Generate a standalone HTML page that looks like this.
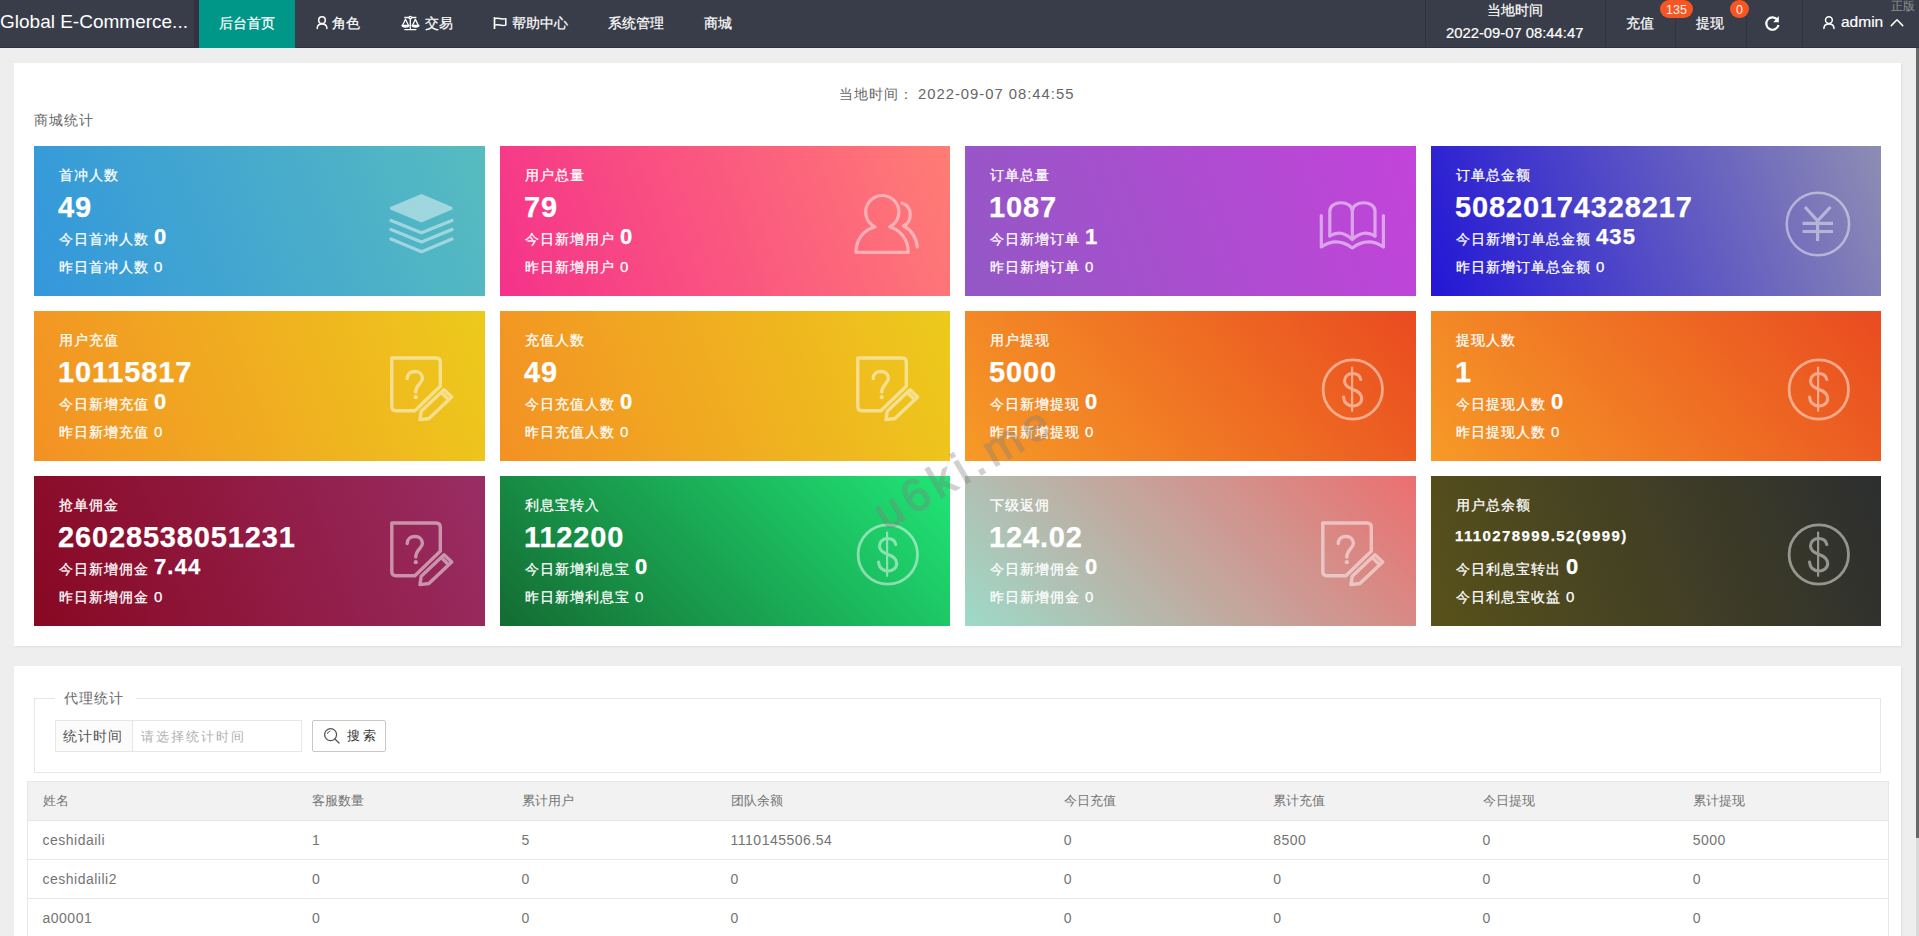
<!DOCTYPE html>
<html><head><meta charset="utf-8"><style>
*{box-sizing:border-box;margin:0;padding:0}
html,body{width:1919px;height:936px;overflow:hidden}
body{background:#eeeeee;font-family:"Liberation Sans",sans-serif;color:#666;position:relative}
.abs{position:absolute;white-space:nowrap}
#hdr{position:absolute;left:0;top:0;width:1919px;height:48px;background:#393d49;color:#fff;border-bottom:1px solid #30333d}
#hdr .t{position:absolute;white-space:nowrap;font-size:14px;line-height:20px;color:#fff;-webkit-text-stroke:0.2px #fff}
#hdr svg{position:absolute;overflow:visible}
.sep{position:absolute;top:0;width:1px;height:47px;background:#31343e}
.badge{position:absolute;height:18px;border-radius:9px;background:#f65623;color:#fff6ea;font-size:12.5px;line-height:20px;text-align:center}
.card{position:absolute;background:#fff;box-shadow:1px 1px 2px rgba(0,0,0,.07)}
.tile{position:absolute;height:150px;color:#fff;overflow:hidden;-webkit-text-stroke:0.25px #fff}
.tile .tt{position:absolute;left:25px;top:20px;font-size:14px;line-height:18px;letter-spacing:1px}
.tile .big{position:absolute;left:24px;top:45px;font-size:29px;line-height:32px;font-weight:bold;letter-spacing:0.85px}
.tile .big.sm{font-size:15px;top:51px;line-height:18px;letter-spacing:1.4px}
.tile .l1{position:absolute;left:25px;top:80px;font-size:14px;line-height:22px;letter-spacing:1px}
.tile .l1 b{font-size:22px;letter-spacing:1.2px}
.tile .l2{position:absolute;left:25px;top:112px;font-size:14px;line-height:18px;letter-spacing:1px}
.tile .l2 span{font-size:15px;letter-spacing:0}
.tile svg{position:absolute;left:355px;top:46px;width:64px;height:64px;overflow:visible}
.tc{position:absolute;font-size:14px;line-height:20px;letter-spacing:0.5px;white-space:nowrap;color:#747474}
.tl{position:absolute;height:1px;background:#e6e6e6}
</style></head><body>
<div id="hdr">
  <div class="t" style="left:0;top:11px;font-size:19px;line-height:22px;-webkit-text-stroke:0">Global E-Commerce...</div>
  <div style="position:absolute;left:194px;top:0;width:5px;height:48px;background:#353141"></div>
  <div style="position:absolute;left:199px;top:0;width:96px;height:48px;background:#009688"></div>
  <div class="t" style="left:219px;top:13px">后台首页</div>
  <svg style="left:310px;top:10px" width="25" height="25" viewBox="0 0 25 25"><g fill="none" stroke="#fff" stroke-width="1.5" stroke-linecap="round"><circle cx="12" cy="10.15" r="3.3"/><path d="M7.2 18.4 C7.2 15.5 9.3 13.9 12 13.9 C14.7 13.9 16.9 15.5 16.9 18.4"/></g></svg>
  <div class="t" style="left:332px;top:13px">角色</div>
  <svg style="left:398px;top:10px" width="25" height="25" viewBox="0 0 25 25"><g fill="none" stroke="#fff" stroke-width="1.3" stroke-linecap="round" stroke-linejoin="round">
    <path d="M6.8 7.5 L17.9 7.5 M12.3 8.5 L12.3 19.6 M6.8 19.6 L17.9 19.6"/><circle cx="12.3" cy="7.5" r="1.2" fill="#393d49"/>
    <path d="M4.5 15.5 L7.5 9.3 L10.5 15.5 M14.5 15.5 L17.4 9.3 L20.3 15.5"/>
    <path d="M4 15.3 L11 15.3 C11 17.6 4 17.6 4 15.3 Z M14 15.3 L21 15.3 C21 17.6 14 17.6 14 15.3 Z" fill="#fff"/></g></svg>
  <div class="t" style="left:425px;top:13px">交易</div>
  <svg style="left:489px;top:10px" width="25" height="25" viewBox="0 0 25 25"><g fill="none" stroke="#fff" stroke-width="1.5" stroke-linejoin="round">
    <path d="M5.5 7 L5.5 19" stroke-width="1.7"/><path d="M6 8.6 C9 7.2 12 10.2 16.8 8.6 L16.8 15.1 C12 16.6 9 13.7 6 15.1"/></g></svg>
  <div class="t" style="left:512px;top:13px">帮助中心</div>
  <div class="t" style="left:608px;top:13px">系统管理</div>
  <div class="t" style="left:704px;top:13px">商城</div>
  <div class="sep" style="left:1425px"></div>
  <div class="sep" style="left:1605px"></div>
  <div class="sep" style="left:1675px"></div>
  <div class="sep" style="left:1746px"></div>
  <div class="sep" style="left:1802px"></div>
  <div class="t" style="left:1487px;top:0px;font-size:14px">当地时间</div>
  <div class="t" style="left:1446px;top:23px;font-size:14.8px">2022-09-07 08:44:47</div>
  <div class="t" style="left:1626px;top:13px">充值</div>
  <div class="badge" style="left:1660px;top:0;width:33px">135</div>
  <div class="t" style="left:1696px;top:13px">提现</div>
  <div class="badge" style="left:1730px;top:0;width:19px">0</div>
  <svg style="left:1760px;top:10px" width="25" height="25" viewBox="0 0 25 25"><g fill="none" stroke="#fff" stroke-width="2.2"><path d="M17.6 10 A6.2 6.2 0 1 0 18.5 15"/></g><path d="M18.8 5.9 L18.8 12.2 L13.2 12.2 Z" fill="#fff"/></svg>
  <svg style="left:1817px;top:10px" width="25" height="25" viewBox="0 0 25 25"><g fill="none" stroke="#fff" stroke-width="1.5" stroke-linecap="round"><circle cx="11.9" cy="10.1" r="3.4"/><path d="M6.9 18.6 C6.9 15.5 9.1 13.9 11.9 13.9 C14.7 13.9 17 15.5 17 18.6"/></g></svg>
  <div class="t" style="left:1841px;top:12px;font-size:15.5px">admin</div>
  <svg style="left:1885px;top:10px" width="25" height="25" viewBox="0 0 25 25"><path d="M6.3 15.6 L12 9.8 L17.7 15.6" fill="none" stroke="#fff" stroke-width="1.5" stroke-linecap="round" stroke-linejoin="round"/></svg>
  <div class="t" style="left:1891px;top:-4px;font-size:12px;color:#8f8f8f;-webkit-text-stroke:0">正版</div>
</div>

<div class="card" style="left:14px;top:63px;width:1887px;height:583px">
  <div class="abs" style="left:825px;top:21px;font-size:14px;line-height:20px;letter-spacing:1px;color:#666">当地时间：<span style="font-size:14.8px;margin-left:4px">2022-09-07 08:44:55</span></div>
  <div class="abs" style="left:20px;top:47px;font-size:14px;line-height:20px;letter-spacing:1px;color:#666">商城统计</div>
</div>
<div class="tile" style="left:34px;top:146px;width:451px;background:linear-gradient(70deg,#3397dc,#57bcbf)"><div class="tt">首冲人数</div><div class="big">49</div><div class="l1">今日首冲人数 <b>0</b></div><div class="l2">昨日首冲人数 <span>0</span></div><svg viewBox="0 0 64 64"><g fill="none" stroke="#fff" stroke-width="3.2" stroke-linecap="round" stroke-linejoin="round" opacity=".45">
  <path d="M2.5 16.3 L32.5 3.6 L62 16.3 L32.5 28.8 Z" fill="#fff"/>
  <path d="M2 28.5 L32.5 40.7 L63 28.5"/><path d="M2 37.5 L32.5 49.9 L63 37.5"/><path d="M2 47 L32.5 59.8 L63 47"/></g></svg></div>
<div class="tile" style="left:500px;top:146px;width:450px;background:linear-gradient(70deg,#f5328a,#ff7d75)"><div class="tt">用户总量</div><div class="big">79</div><div class="l1">今日新增用户 <b>0</b></div><div class="l2">昨日新增用户 <span>0</span></div><svg viewBox="0 0 64 64"><g fill="none" stroke="#fff" stroke-width="3.2" stroke-linecap="round" stroke-linejoin="round" opacity=".45">
  <path d="M20 35 A16.6 16.6 0 1 1 34.6 35 C45 37.5 53.3 47.5 53.3 60.3 L1 60.3 C1 47.5 9 37.5 20 35 Z"/>
  <path d="M47 11 C52.5 13 55.3 17.5 55.3 22.5 C55.3 27.5 52.5 32 48.5 34 C56 37.5 61.5 45.5 62.3 55"/></g></svg></div>
<div class="tile" style="left:965px;top:146px;width:451px;background:linear-gradient(70deg,#9358c5,#c343da)"><div class="tt">订单总量</div><div class="big">1087</div><div class="l1">今日新增订单 <b>1</b></div><div class="l2">昨日新增订单 <span>0</span></div><svg viewBox="0 0 64 64"><g fill="none" stroke="#fff" stroke-width="3.2" stroke-linecap="round" stroke-linejoin="round" opacity=".5">
  <path d="M1.3 23.5 L1.3 55 Q16.8 44.5 32.3 56 Q47.8 44.5 63.4 55 L63.4 23.5"/>
  <path d="M9.8 44 L9.8 19 C9.8 8 32.3 8 32.3 19 C32.3 8 55 8 55 19 L55 44"/>
  <path d="M32.3 19 L32.3 46"/><path d="M9.8 44 Q21 37 32.3 47.5 Q43.5 37 55 44"/></g></svg></div>
<div class="tile" style="left:1431px;top:146px;width:450px;background:linear-gradient(70deg,#2316d6,#8e8db3)"><div class="tt">订单总金额</div><div class="big">50820174328217</div><div class="l1">今日新增订单总金额 <b>435</b></div><div class="l2">昨日新增订单总金额 <span>0</span></div><svg viewBox="0 0 64 64"><g fill="none" stroke="#fff" stroke-linecap="round" stroke-linejoin="round" opacity=".45">
  <circle cx="31.9" cy="32" r="31.2" stroke-width="2.6"/>
  <path d="M19 15 L31.6 28.8 L44.5 15 M31.6 28.8 L31.6 49 M16.5 31.3 L47 31.3 M16.5 39.5 L47 39.5" stroke-width="3.2" stroke-linecap="butt"/></g></svg></div>
<div class="tile" style="left:34px;top:311px;width:451px;background:linear-gradient(70deg,#f39124,#edca1c)"><div class="tt">用户充值</div><div class="big">10115817</div><div class="l1">今日新增充值 <b>0</b></div><div class="l2">昨日新增充值 <span>0</span></div><svg viewBox="0 0 64 64"><g fill="none" stroke="#fff" stroke-width="3.4" stroke-linecap="round" stroke-linejoin="round" opacity=".5">
  <path d="M25.9 53.7 L7 53.7 Q2.8 53.7 2.8 49.5 L2.8 1 L47 1 Q51.3 1 51.3 5.3 L51.3 29.3 L25.9 53.7"/>
  <path d="M18.2 21.6 C18.2 17 21.5 14.5 26 14.5 C30.5 14.5 33.4 17.5 33.4 21.5 C33.4 26 26.8 28 26.8 35"/>
  <circle cx="26.8" cy="40.2" r="2.1" fill="#fff" stroke="none"/>
  <path d="M55 32.7 L62.7 40 L39.9 61.5 L31 62.6 L32.2 54.2 Z M52.2 35.5 L59.7 42.8"/></g></svg></div>
<div class="tile" style="left:500px;top:311px;width:450px;background:linear-gradient(70deg,#f39124,#edca1c)"><div class="tt">充值人数</div><div class="big">49</div><div class="l1">今日充值人数 <b>0</b></div><div class="l2">昨日充值人数 <span>0</span></div><svg viewBox="0 0 64 64"><g fill="none" stroke="#fff" stroke-width="3.4" stroke-linecap="round" stroke-linejoin="round" opacity=".5">
  <path d="M25.9 53.7 L7 53.7 Q2.8 53.7 2.8 49.5 L2.8 1 L47 1 Q51.3 1 51.3 5.3 L51.3 29.3 L25.9 53.7"/>
  <path d="M18.2 21.6 C18.2 17 21.5 14.5 26 14.5 C30.5 14.5 33.4 17.5 33.4 21.5 C33.4 26 26.8 28 26.8 35"/>
  <circle cx="26.8" cy="40.2" r="2.1" fill="#fff" stroke="none"/>
  <path d="M55 32.7 L62.7 40 L39.9 61.5 L31 62.6 L32.2 54.2 Z M52.2 35.5 L59.7 42.8"/></g></svg></div>
<div class="tile" style="left:965px;top:311px;width:451px;background:linear-gradient(50deg,#f69a27,#e94b20)"><div class="tt">用户提现</div><div class="big">5000</div><div class="l1">今日新增提现 <b>0</b></div><div class="l2">昨日新增提现 <span>0</span></div><svg viewBox="0 0 64 64"><g fill="none" stroke="#fff" stroke-linecap="round" stroke-linejoin="round" opacity=".48">
  <circle cx="32.8" cy="32.5" r="29.7" stroke-width="2.8"/>
  <path d="M32.1 10.5 L32.1 53.8" stroke-width="2.2"/>
  <path d="M40.8 22.5 C40 18.5 36.5 16.5 32.5 16.5 C28 16.5 24.5 19.5 24.5 24 C24.5 29 29 31 33 32.5 C37.5 34 41.7 36.5 41.7 41.5 C41.7 46 37.5 49 33 49 C27.5 49 24 45.5 23.5 40" stroke-width="3.1"/></g></svg></div>
<div class="tile" style="left:1431px;top:311px;width:450px;background:linear-gradient(50deg,#f69a27,#e94b20)"><div class="tt">提现人数</div><div class="big">1</div><div class="l1">今日提现人数 <b>0</b></div><div class="l2">昨日提现人数 <span>0</span></div><svg viewBox="0 0 64 64"><g fill="none" stroke="#fff" stroke-linecap="round" stroke-linejoin="round" opacity=".48">
  <circle cx="32.8" cy="32.5" r="29.7" stroke-width="2.8"/>
  <path d="M32.1 10.5 L32.1 53.8" stroke-width="2.2"/>
  <path d="M40.8 22.5 C40 18.5 36.5 16.5 32.5 16.5 C28 16.5 24.5 19.5 24.5 24 C24.5 29 29 31 33 32.5 C37.5 34 41.7 36.5 41.7 41.5 C41.7 46 37.5 49 33 49 C27.5 49 24 45.5 23.5 40" stroke-width="3.1"/></g></svg></div>
<div class="tile" style="left:34px;top:476px;width:451px;background:linear-gradient(70deg,#880822,#992d64)"><div class="tt">抢单佣金</div><div class="big">26028538051231</div><div class="l1">今日新增佣金 <b>7.44</b></div><div class="l2">昨日新增佣金 <span>0</span></div><svg viewBox="0 0 64 64"><g fill="none" stroke="#fff" stroke-width="3.4" stroke-linecap="round" stroke-linejoin="round" opacity=".5">
  <path d="M25.9 53.7 L7 53.7 Q2.8 53.7 2.8 49.5 L2.8 1 L47 1 Q51.3 1 51.3 5.3 L51.3 29.3 L25.9 53.7"/>
  <path d="M18.2 21.6 C18.2 17 21.5 14.5 26 14.5 C30.5 14.5 33.4 17.5 33.4 21.5 C33.4 26 26.8 28 26.8 35"/>
  <circle cx="26.8" cy="40.2" r="2.1" fill="#fff" stroke="none"/>
  <path d="M55 32.7 L62.7 40 L39.9 61.5 L31 62.6 L32.2 54.2 Z M52.2 35.5 L59.7 42.8"/></g></svg></div>
<div class="tile" style="left:500px;top:476px;width:450px;background:linear-gradient(45deg,#146b32,#20e676)"><div class="tt">利息宝转入</div><div class="big">112200</div><div class="l1">今日新增利息宝 <b>0</b></div><div class="l2">昨日新增利息宝 <span>0</span></div><svg viewBox="0 0 64 64"><g fill="none" stroke="#fff" stroke-linecap="round" stroke-linejoin="round" opacity=".48">
  <circle cx="32.8" cy="32.5" r="29.7" stroke-width="2.8"/>
  <path d="M32.1 10.5 L32.1 53.8" stroke-width="2.2"/>
  <path d="M40.8 22.5 C40 18.5 36.5 16.5 32.5 16.5 C28 16.5 24.5 19.5 24.5 24 C24.5 29 29 31 33 32.5 C37.5 34 41.7 36.5 41.7 41.5 C41.7 46 37.5 49 33 49 C27.5 49 24 45.5 23.5 40" stroke-width="3.1"/></g></svg></div>
<div class="tile" style="left:965px;top:476px;width:451px;background:linear-gradient(45deg,#9ddac8,#ec6f6f)"><div class="tt">下级返佣</div><div class="big">124.02</div><div class="l1">今日新增佣金 <b>0</b></div><div class="l2">昨日新增佣金 <span>0</span></div><svg viewBox="0 0 64 64"><g fill="none" stroke="#fff" stroke-width="3.4" stroke-linecap="round" stroke-linejoin="round" opacity=".5">
  <path d="M25.9 53.7 L7 53.7 Q2.8 53.7 2.8 49.5 L2.8 1 L47 1 Q51.3 1 51.3 5.3 L51.3 29.3 L25.9 53.7"/>
  <path d="M18.2 21.6 C18.2 17 21.5 14.5 26 14.5 C30.5 14.5 33.4 17.5 33.4 21.5 C33.4 26 26.8 28 26.8 35"/>
  <circle cx="26.8" cy="40.2" r="2.1" fill="#fff" stroke="none"/>
  <path d="M55 32.7 L62.7 40 L39.9 61.5 L31 62.6 L32.2 54.2 Z M52.2 35.5 L59.7 42.8"/></g></svg></div>
<div class="tile" style="left:1431px;top:476px;width:450px;background:linear-gradient(70deg,#58511a,#2c2e2f)"><div class="tt">用户总余额</div><div class="big sm">1110278999.52(9999)</div><div class="l1">今日利息宝转出 <b>0</b></div><div class="l2">今日利息宝收益 <span>0</span></div><svg viewBox="0 0 64 64"><g fill="none" stroke="#fff" stroke-linecap="round" stroke-linejoin="round" opacity=".48">
  <circle cx="32.8" cy="32.5" r="29.7" stroke-width="2.8"/>
  <path d="M32.1 10.5 L32.1 53.8" stroke-width="2.2"/>
  <path d="M40.8 22.5 C40 18.5 36.5 16.5 32.5 16.5 C28 16.5 24.5 19.5 24.5 24 C24.5 29 29 31 33 32.5 C37.5 34 41.7 36.5 41.7 41.5 C41.7 46 37.5 49 33 49 C27.5 49 24 45.5 23.5 40" stroke-width="3.1"/></g></svg></div><div class="card" style="left:14px;top:666px;width:1887px;height:290px"></div>
<div style="position:absolute;left:34px;top:698px;width:1847px;height:75px;border:1px solid #e6e6e6;border-top-color:#e6e6e6"></div>
<div style="position:absolute;left:55px;top:690px;width:81px;height:16px;background:#fff"></div>
<div class="abs" style="left:64px;top:688px;font-size:14px;line-height:20px;letter-spacing:1px;color:#666">代理统计</div>
<div style="position:absolute;left:55px;top:720px;width:78px;height:32px;border:1px solid #e6e6e6;background:#fbfbfb"></div>
<div class="abs" style="left:63px;top:726px;font-size:14px;line-height:20px;letter-spacing:1px;color:#555">统计时间</div>
<div style="position:absolute;left:132px;top:720px;width:170px;height:32px;border:1px solid #e6e6e6;background:#fff"></div>
<div class="abs" style="left:141px;top:727px;font-size:13px;line-height:20px;letter-spacing:2px;color:#b0b0b0">请选择统计时间</div>
<div style="position:absolute;left:312px;top:720px;width:74px;height:32px;border:1px solid #c9c9c9;background:#fff;border-radius:2px"></div>
<svg style="position:absolute;left:322px;top:726px" width="20" height="20" viewBox="0 0 20 20"><g fill="none" stroke="#555" stroke-width="1.3" stroke-linecap="round"><circle cx="8.6" cy="8.6" r="6"/><path d="M13 13 L17 17"/><path d="M5.5 7.5 A3.5 3.5 0 0 1 8 5" stroke-width="1"/></g></svg>
<div class="abs" style="left:347px;top:726px;font-size:13px;line-height:20px;letter-spacing:3px;color:#333">搜索</div>
<div style="position:absolute;left:27px;top:781px;width:1862px;height:160px;border:1px solid #e6e6e6;border-bottom:none;background:#fff"></div>
<div style="position:absolute;left:28px;top:782px;width:1860px;height:38px;background:#f2f2f2"></div>
<div class="tl" style="left:28px;top:820px;width:1860px"></div>
<div class="tl" style="left:28px;top:859px;width:1860px"></div>
<div class="tl" style="left:28px;top:898px;width:1860px"></div>
<div class="tc" style="left:42.5px;top:791px;font-size:13px;letter-spacing:0">姓名</div>
<div class="tc" style="left:312.0px;top:791px;font-size:13px;letter-spacing:0">客服数量</div>
<div class="tc" style="left:521.5px;top:791px;font-size:13px;letter-spacing:0">累计用户</div>
<div class="tc" style="left:730.6px;top:791px;font-size:13px;letter-spacing:0">团队余额</div>
<div class="tc" style="left:1063.7px;top:791px;font-size:13px;letter-spacing:0">今日充值</div>
<div class="tc" style="left:1273.2px;top:791px;font-size:13px;letter-spacing:0">累计充值</div>
<div class="tc" style="left:1482.5px;top:791px;font-size:13px;letter-spacing:0">今日提现</div>
<div class="tc" style="left:1692.7px;top:791px;font-size:13px;letter-spacing:0">累计提现</div>
<div class="tc" style="left:42.5px;top:830px">ceshidaili</div>
<div class="tc" style="left:312.0px;top:830px">1</div>
<div class="tc" style="left:521.5px;top:830px">5</div>
<div class="tc" style="left:730.6px;top:830px">1110145506.54</div>
<div class="tc" style="left:1063.7px;top:830px">0</div>
<div class="tc" style="left:1273.2px;top:830px">8500</div>
<div class="tc" style="left:1482.5px;top:830px">0</div>
<div class="tc" style="left:1692.7px;top:830px">5000</div>
<div class="tc" style="left:42.5px;top:869px">ceshidalili2</div>
<div class="tc" style="left:312.0px;top:869px">0</div>
<div class="tc" style="left:521.5px;top:869px">0</div>
<div class="tc" style="left:730.6px;top:869px">0</div>
<div class="tc" style="left:1063.7px;top:869px">0</div>
<div class="tc" style="left:1273.2px;top:869px">0</div>
<div class="tc" style="left:1482.5px;top:869px">0</div>
<div class="tc" style="left:1692.7px;top:869px">0</div>
<div class="tc" style="left:42.5px;top:908px">a00001</div>
<div class="tc" style="left:312.0px;top:908px">0</div>
<div class="tc" style="left:521.5px;top:908px">0</div>
<div class="tc" style="left:730.6px;top:908px">0</div>
<div class="tc" style="left:1063.7px;top:908px">0</div>
<div class="tc" style="left:1273.2px;top:908px">0</div>
<div class="tc" style="left:1482.5px;top:908px">0</div>
<div class="tc" style="left:1692.7px;top:908px">0</div>
<svg style="position:absolute;left:0;top:0;overflow:visible" width="1919" height="936"><g opacity=".36"><text x="886" y="531" transform="rotate(-30.5 886 531)" font-family="Liberation Sans,sans-serif" font-size="46" letter-spacing="5.5" fill="#808080" stroke="#808080" stroke-width="1.3">u6ki.me</text></g></svg>
<div style="position:absolute;left:1916px;top:48px;width:3px;height:790px;background:#686868"></div>
<div style="position:absolute;left:1916px;top:838px;width:3px;height:98px;background:#d9d9d9"></div>
</body></html>
